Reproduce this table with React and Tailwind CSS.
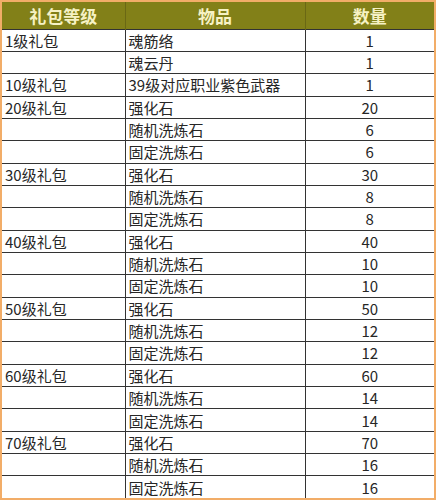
import React from 'react';

const rows = [
    ['1级礼包', '魂筋络', '1'],
    ['', '魂云丹', '1'],
    ['10级礼包', '39级对应职业紫色武器', '1'],
    ['20级礼包', '强化石', '20'],
    ['', '随机洗炼石', '6'],
    ['', '固定洗炼石', '6'],
    ['30级礼包', '强化石', '30'],
    ['', '随机洗炼石', '8'],
    ['', '固定洗炼石', '8'],
    ['40级礼包', '强化石', '40'],
    ['', '随机洗炼石', '10'],
    ['', '固定洗炼石', '10'],
    ['50级礼包', '强化石', '50'],
    ['', '随机洗炼石', '12'],
    ['', '固定洗炼石', '12'],
    ['60级礼包', '强化石', '60'],
    ['', '随机洗炼石', '14'],
    ['', '固定洗炼石', '14'],
    ['70级礼包', '强化石', '70'],
    ['', '随机洗炼石', '16'],
    ['', '固定洗炼石', '16'],
];

const App = () => {
    return (
        <div
            className="w-[436px] h-[500px] bg-white border-2 border-[#f2ad68] overflow-hidden"
            style={{ fontFamily: '"Microsoft YaHei", "Noto Sans CJK SC", sans-serif' }}
        >
            <table className="w-full border-collapse table-fixed">
                <colgroup>
                    <col className="w-[123px]" />
                    <col className="w-[180px]" />
                    <col />
                </colgroup>
                <thead>
                    <tr className="h-[27px] bg-[#828018] text-[#f6f2c4] text-[17px] font-bold">
                        <th className="border-r border-[#6a6814] text-center leading-none">礼包等级</th>
                        <th className="border-r border-[#6a6814] text-center leading-none">物品</th>
                        <th className="text-center leading-none">数量</th>
                    </tr>
                </thead>
                <tbody className="text-[15px] text-[#262626]">
                    {rows.map((r, i) => (
                        <tr key={i} className="h-[22.35px]">
                            <td className="border-t border-r border-[#333] pl-[3px] leading-none">{r[0]}</td>
                            <td className="border-t border-r border-[#333] pl-[3px] leading-none">{r[1]}</td>
                            <td className="border-t border-[#333] text-center leading-none">{r[2]}</td>
                        </tr>
                    ))}
                </tbody>
            </table>
        </div>
    );
};

export default App;
